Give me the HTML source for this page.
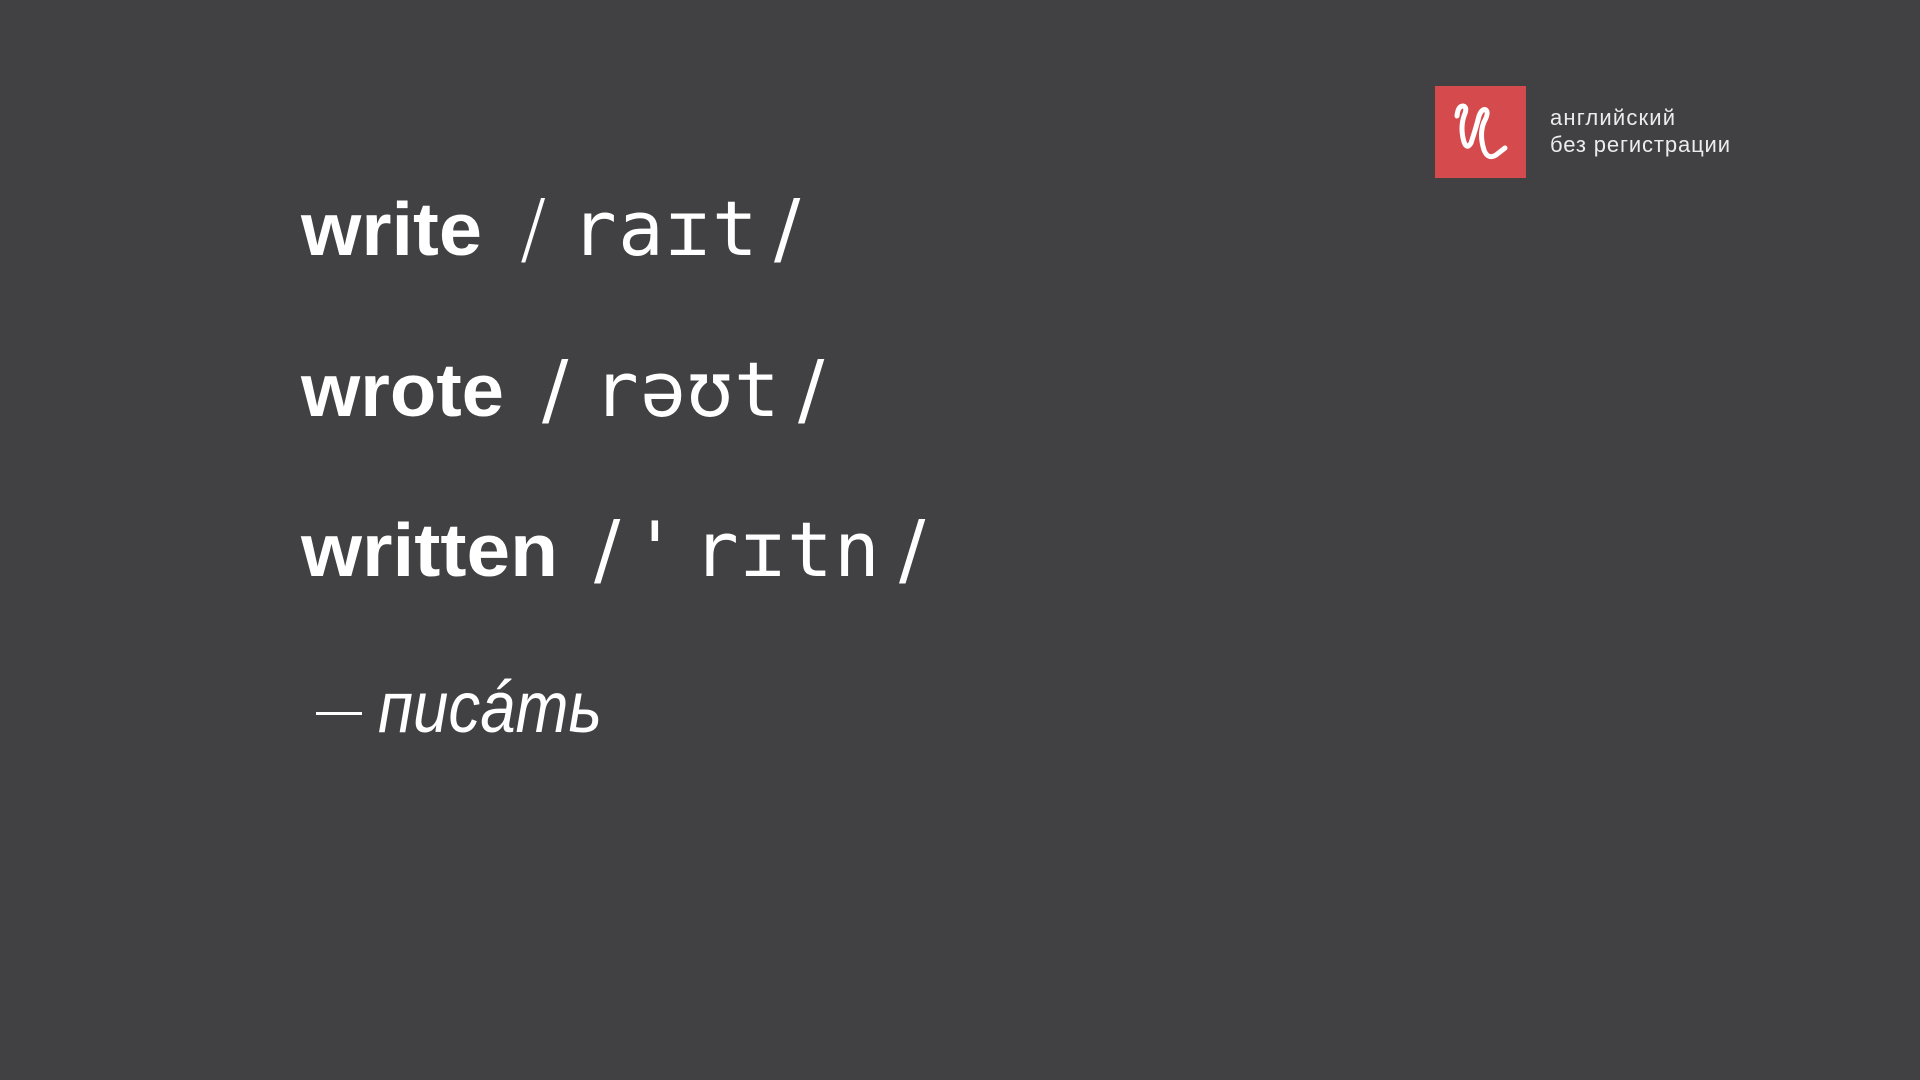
<!DOCTYPE html>
<html><head><meta charset="utf-8"><style>
html,body{margin:0;padding:0;background:#414143;width:1920px;height:1080px;overflow:hidden}
svg{display:block}
.b{font-family:"Liberation Sans",sans-serif;font-weight:bold;fill:#fff}
.m{font-family:"DejaVu Sans Mono","Liberation Mono",monospace;fill:#fff}
.s{font-family:"DejaVu Sans","Liberation Sans",sans-serif;fill:#fff}
.l{font-family:"Liberation Sans","DejaVu Sans",sans-serif;fill:#ececec}
.i{font-family:"Liberation Sans","DejaVu Sans",sans-serif;font-style:italic;fill:#fff}
</style></head><body>
<svg width="1920" height="1080" viewBox="0 0 1920 1080">
<rect x="1435" y="86" width="91" height="92" fill="#d54b4d"/>
<path d="M1457,116 Q1458,106 1463,106 Q1468,107 1464,116 Q1460,128 1464,142 Q1467,150 1471,143 Q1476,128 1479,116 Q1482,108 1486,110 Q1489,113 1484,122 Q1479,134 1484,150 Q1488,160 1496,155 L1505,148" fill="none" stroke="#fff" stroke-width="5" stroke-linecap="round" stroke-linejoin="round"/>
<text class="l" x="1550" y="125" font-size="22" textLength="125">английский</text>
<text class="l" x="1550" y="152" font-size="22" textLength="180">без регистрации</text>

<text class="b" x="301" y="255" font-size="75" textLength="181" lengthAdjust="spacingAndGlyphs">write</text>
<text class="s" x="520" y="255" font-size="78" font-weight="200">/</text>
<text class="m" x="571 618 665 712" y="255" font-size="76">raɪt</text>
<text class="s" x="774" y="255" font-size="78">/</text>

<text class="b" x="301" y="416" font-size="75" textLength="203" lengthAdjust="spacingAndGlyphs">wrote</text>
<text class="s" x="542" y="416" font-size="78">/</text>
<text class="m" x="593 640 687 734" y="416" font-size="76">rəʊt</text>
<text class="s" x="798" y="416" font-size="78">/</text>

<text class="b" x="301" y="576" font-size="75" textLength="257" lengthAdjust="spacingAndGlyphs">written</text>
<text class="s" x="594" y="576" font-size="78">/</text>
<text class="m" x="632 693 740 787 834" y="576" font-size="76">'rɪtn</text>
<text class="s" x="899" y="576" font-size="78">/</text>

<rect x="316" y="712" width="46" height="3" fill="#fff"/>
<text class="i" x="378" y="732" font-size="72" textLength="224" lengthAdjust="spacingAndGlyphs">писáть</text>
</svg>
</body></html>
